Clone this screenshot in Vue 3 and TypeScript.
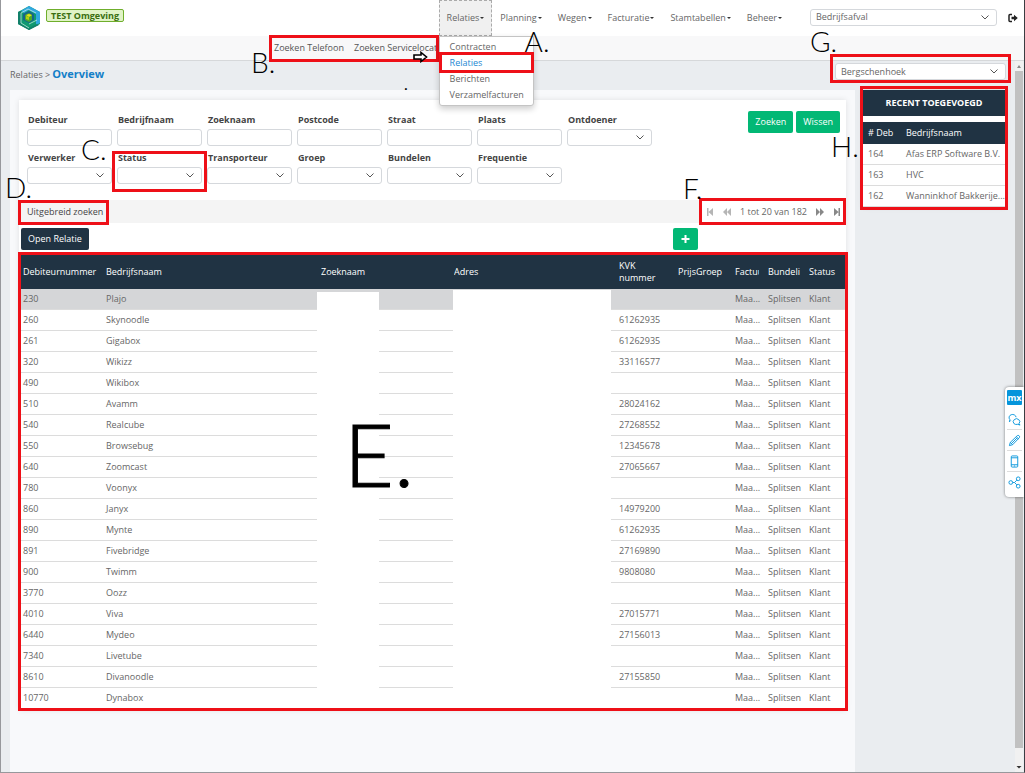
<script setup lang="ts">
import { ref } from 'vue'

interface Row { nr: string; naam: string; kvk: string }
interface Field { id: string; label: string; select: boolean }

const menus = ['Relaties', 'Planning', 'Wegen', 'Facturatie', 'Stamtabellen', 'Beheer']
const submenu = ['Contracten', 'Relaties', 'Berichten', 'Verzamelfacturen']

const fields: Field[] = [
  { id: 'debiteur', label: 'Debiteur', select: false },
  { id: 'bedrijfnaam', label: 'Bedrijfnaam', select: false },
  { id: 'zoeknaam', label: 'Zoeknaam', select: false },
  { id: 'postcode', label: 'Postcode', select: false },
  { id: 'straat', label: 'Straat', select: false },
  { id: 'plaats', label: 'Plaats', select: false },
  { id: 'ontdoener', label: 'Ontdoener', select: true },
  { id: 'verwerker', label: 'Verwerker', select: true },
  { id: 'status', label: 'Status', select: true },
  { id: 'transporteur', label: 'Transporteur', select: true },
  { id: 'groep', label: 'Groep', select: true },
  { id: 'bundelen', label: 'Bundelen', select: true },
  { id: 'frequentie', label: 'Frequentie', select: true },
]

const columns = ['Debiteurnummer', 'Bedrijfsnaam', 'Zoeknaam', 'Adres', 'KVK nummer', 'PrijsGroep', 'Factuur', 'Bundeling', 'Status']

const rows: Row[] = [
  { nr: '230', naam: 'Plajo', kvk: '' },
  { nr: '260', naam: 'Skynoodle', kvk: '61262935' },
  { nr: '261', naam: 'Gigabox', kvk: '61262935' },
  { nr: '320', naam: 'Wikizz', kvk: '33116577' },
  { nr: '490', naam: 'Wikibox', kvk: '' },
  { nr: '510', naam: 'Avamm', kvk: '28024162' },
  { nr: '540', naam: 'Realcube', kvk: '27268552' },
  { nr: '550', naam: 'Browsebug', kvk: '12345678' },
  { nr: '640', naam: 'Zoomcast', kvk: '27065667' },
  { nr: '780', naam: 'Voonyx', kvk: '' },
  { nr: '860', naam: 'Janyx', kvk: '14979200' },
  { nr: '890', naam: 'Mynte', kvk: '61262935' },
  { nr: '891', naam: 'Fivebridge', kvk: '27169890' },
  { nr: '900', naam: 'Twimm', kvk: '9808080' },
  { nr: '3770', naam: 'Oozz', kvk: '' },
  { nr: '4010', naam: 'Viva', kvk: '27015771' },
  { nr: '6440', naam: 'Mydeo', kvk: '27156013' },
  { nr: '7340', naam: 'Livetube', kvk: '' },
  { nr: '8610', naam: 'Divanoodle', kvk: '27155850' },
  { nr: '10770', naam: 'Dynabox', kvk: '' },
]

const recent = [
  { nr: '164', naam: 'Afas ERP Software B.V.' },
  { nr: '163', naam: 'HVC' },
  { nr: '162', naam: 'Wanninkhof Bakkerije...' },
]

const selected = ref(0)
</script>

<template>
  <div class="window">
    <header class="topbar">
      <svg class="logo" viewBox="0 0 24 26" aria-label="Logo">
        <path d="M12 1 23 7v12l-11 6L1 19V7z" fill="#0f9a70" />
        <path d="M12 1 23 7v11l-4 2V9l-7-4-5 3-3-2z" fill="#2fa8e0" />
        <path d="M1 7l3-1v13l8 4 8-4 2 1-10 5L1 19z" fill="#12806a" />
        <path d="M6 9l6-3 5 3v6l-5 3-6-3z" fill="#16648c" />
        <path d="M8 10l4-2 3 2v5l-3 2-4-2z" fill="#4ba82e" />
        <path d="M9 10l3-1 3 1-3 2z" fill="#e6e21a" />
        <path d="M9 11l3 1v3l-3-1z" fill="#b5cf12" />
        <path d="M4 8v10l8 5M12 19l8-4M4 8l7-4 8 4" fill="none" stroke="#d4f2ea" stroke-width="0.7" />
      </svg>
      <span class="env">TEST Omgeving</span>
      <nav class="menu">
        <div v-for="(m, i) in menus" :key="m" class="menu-item" :class="{ open: i === 0 }">
          <button type="button" class="menu-btn">{{ m }}<i class="caret"></i></button>
          <div v-if="i === 0" class="dropdown">
            <a v-for="(s, j) in submenu" :key="s" href="#" :class="{ current: j === 1, mark: j === 1 }">{{ s }}</a>
            <span class="letter letter-a">A.</span>
          </div>
        </div>
      </nav>
      <span class="pick pick-top">
        <select aria-label="Afvalsoort"><option>Bedrijfsafval</option></select>
        <svg class="chev" viewBox="0 0 8 5"><path d="M.5.5 4 4 7.500.500" /></svg>
      </span>
      <button type="button" class="logout" aria-label="Uitloggen">
        <svg viewBox="0 0 10 10"><path d="M4 1.500H2Q1 1.500 1 2.500v5q0 1 1 1h2" fill="none" stroke="#222" stroke-width="1.500" /><path d="M3.500 3.800h2.500V1.800L9.800 5 6 8.200V6.200H3.500z" fill="#222" /></svg>
      </button>
    </header>

    <div class="subbar">
      <div class="subnav mark">
        <a href="#">Zoeken Telefoon</a>
        <a href="#">Zoeken Servicelocat</a>
        <svg class="pointer" viewBox="0 0 15 12"><path d="M1 4h7V1.500L13.500 6 8 10.500V8H1z" fill="#fff" stroke="#000" stroke-width="1.600" /></svg>
        <span class="letter letter-b">B.</span>
        <span class="dot">.</span>
      </div>
    </div>

    <div class="body">
      <div class="page">
        <div class="crumbs">
          <div class="trail"><span>Relaties &gt;</span> <h1>Overview</h1></div>
          <span class="pick pick-place mark">
            <select aria-label="Vestiging"><option>Bergschenhoek</option></select>
            <svg class="chev" viewBox="0 0 8 5"><path d="M.5.5 4 4 7.500.500" /></svg>
            <span class="letter letter-g">G.</span>
          </span>
        </div>

        <div class="columns">
          <main class="panel">
            <div class="card">
              <form class="search" @submit.prevent>
                <div class="fields">
                  <div v-for="f in fields" :key="f.id" class="field" :class="{ mark: f.id === 'status' }">
                    <label :for="f.id">{{ f.label }}</label>
                    <span v-if="f.select" class="pick">
                      <select :id="f.id"><option></option></select>
                      <svg class="chev" viewBox="0 0 8 5"><path d="M.5.5 4 4 7.500.500" /></svg>
                    </span>
                    <input v-else :id="f.id" type="text" />
                    <span v-if="f.id === 'status'" class="letter letter-c">C.</span>
                  </div>
                </div>
                <div class="actions">
                  <button type="submit" class="btn green">Zoeken</button>
                  <button type="reset" class="btn green">Wissen</button>
                </div>
              </form>

              <div class="strip">
                <button type="button" class="more mark">Uitgebreid zoeken<span class="letter letter-d">D.</span></button>
                <div class="pager mark">
                  <button type="button" disabled aria-label="Eerste"><svg viewBox="0 0 8 8"><path d="M1 0h1.500v8H1zM7 0v8L2.500 4z" /></svg></button>
                  <button type="button" disabled aria-label="Vorige"><svg viewBox="0 0 8 8"><path d="M4 0v8L0 4zM8 0v8L4 4z" /></svg></button>
                  <span>1 tot 20 van 182</span>
                  <button type="button" aria-label="Volgende"><svg viewBox="0 0 8 8"><path d="M0 0v8l4-4zM4 0v8l4-4z" /></svg></button>
                  <button type="button" aria-label="Laatste"><svg viewBox="0 0 8 8"><path d="M5.500 0H7v8H5.500zM1 0v8l4.500-4z" /></svg></button>
                  <span class="letter letter-f">F.</span>
                </div>
              </div>

              <div class="tools">
                <button type="button" class="btn navy">Open Relatie</button>
                <button type="button" class="btn green add" aria-label="Toevoegen"><svg viewBox="0 0 8 8"><path d="M3 0h2v3h3v2H5v3H3V5H0V3h3z" /></svg></button>
              </div>

              <div class="grid mark">
                <table>
                  <colgroup>
                    <col class="c-nr" /><col /><col class="c-zoek" /><col class="c-adres" /><col class="c-kvk" />
                    <col class="c-prijs" /><col class="c-fact" /><col class="c-bund" /><col class="c-stat" />
                  </colgroup>
                  <thead>
                    <tr><th v-for="c in columns" :key="c" scope="col" :class="{ wrap: c === 'KVK nummer' }">{{ c }}</th></tr>
                  </thead>
                  <tbody>
                    <tr v-for="(r, i) in rows" :key="r.nr" :class="{ selected: i === selected }" @click="selected = i">
                      <td>{{ r.nr }}</td><td>{{ r.naam }}</td><td></td><td></td><td>{{ r.kvk }}</td><td></td>
                      <td>Maa...</td><td>Splitsen</td><td>Klant</td>
                    </tr>
                  </tbody>
                </table>
                <div class="cover cover-zoek"></div>
                <div class="cover cover-adres"></div>
                <span class="letter letter-e">E.</span>
              </div>
            </div>
          </main>

          <aside class="recent mark">
            <h2>RECENT TOEGEVOEGD</h2>
            <table>
              <colgroup><col class="c-deb" /><col /></colgroup>
              <thead><tr><th scope="col"># Deb</th><th scope="col">Bedrijfsnaam</th></tr></thead>
              <tbody>
                <tr v-for="r in recent" :key="r.nr"><td>{{ r.nr }}</td><td>{{ r.naam }}</td></tr>
              </tbody>
            </table>
            <span class="letter letter-h">H.</span>
          </aside>
        </div>
      </div>

      <div class="scroll" aria-hidden="true">
        <svg viewBox="0 0 8 10"><path d="M4 4l2 3H2z" fill="#888" /></svg>
        <div class="thumb"></div>
        <svg class="down" viewBox="0 0 8 10"><path d="M4 6.500 1.500 4h5z" fill="#333" /></svg>
      </div>
    </div>

    <div class="widget">
      <button type="button" class="mx">mx</button>
      <button type="button" aria-label="Chat"><svg viewBox="0 0 14 14"><path d="M3 8 1.500 9.500 2 7A3.800 3.300 0 1 1 8.700 4.500M6.500 11.500A3.500 3.200 0 1 1 11.800 11.500L13 13l-2.500-.8Q8 12.800 6.500 11.500z" /></svg></button>
      <button type="button" aria-label="Bewerken"><svg viewBox="0 0 14 14"><path d="M1.500 12.500 2.500 9 10 1.800q1-.8 2 .2t.2 2L5 11.500zM2.500 9 5 11.500M9 3l2.300 2.300M4 10l6-6" /></svg></button>
      <button type="button" aria-label="Mobiel"><svg viewBox="0 0 14 14"><path d="M4.500 1h5q1 0 1 1v10q0 1-1 1h-5q-1 0-1-1V2q0-1 1-1zM3.500 3h7M3.500 10.500h7M6.500 11.800h1" /></svg></button>
      <button type="button" aria-label="Delen"><svg viewBox="0 0 14 14"><circle cx="3" cy="7" r="2" /><circle cx="11" cy="3" r="2" /><circle cx="11" cy="11" r="2" /><path d="M5 7h2l2.500-2.500M7 7l2.500 2.500" /></svg></button>
    </div>
  </div>
</template>

<style>
html, body { margin: 0; background: #eaedf0; }
</style>

<style scoped>
* { box-sizing: border-box; }
.window {
  position: relative; display: flex; flex-direction: column; min-height: 100vh; overflow: hidden;
  border: solid #97989c; border-width: 0 1px 1px 1px; border-right-color: #3a3d42;
  background: #eaedf0; color: #666; font: 9px/14px "Open Sans", "Noto Sans", sans-serif;
}
button, input, select { font: inherit; color: inherit; margin: 0; padding: 0; border: 0; background: none; }
button { cursor: pointer; }
a { color: inherit; text-decoration: none; }
h1, h2 { margin: 0; }

/* Red highlight frames and their letters */
.mark { position: relative; }
.mark::after { content: ""; position: absolute; inset: 0; border: 3px solid #ee1018; pointer-events: none; z-index: 2; }
.letter { position: absolute; z-index: 5; font: 300 28px/28px Lato, sans-serif; color: #000; white-space: nowrap; pointer-events: none; }
.letter-a { left: 85px; top: -10px; }
.letter-b { left: -18px; top: 12px; }
.letter-c { left: -36px; top: -16px; }
.letter-d { left: -16px; top: -27px; }
.letter-e { left: 325px; top: 157px; font-size: 86px; line-height: 86px; -webkit-text-stroke: 1px #000; }
.letter-f { left: -16px; top: -26px; }
.letter-g { left: -25px; top: -36px; }
.letter-h { left: -32px; top: 42px; }
.dot { position: absolute; left: 135px; top: 40px; font: 400 16px/16px Lato, sans-serif; color: #000; }

.topbar { display: flex; align-items: center; height: 36px; background: #fff; }
.logo { width: 24px; height: 26px; margin-left: 16px; }
.env { margin: -5px 0 0 5px; padding: 0 4px; border: 1px solid #6fae2c; border-radius: 2px; background: #e0f3c6; color: #3a6e10; font-weight: 700; line-height: 11px; }
.menu { display: flex; align-self: stretch; margin-left: auto; }
.menu-item { position: relative; display: flex; }
.menu-btn { padding: 0 7px; border: 1px solid transparent; color: #666; }
.open .menu-btn { background: #f0f0f0; border: 1px dashed #aaa; }
.caret { display: inline-block; margin-left: 1px; vertical-align: 2px; border: solid transparent; border-width: 2px 2px 0; border-top-color: #333; }
.dropdown { position: absolute; z-index: 4; left: 0; top: 36px; width: 95px; padding: 2px 0; background: #fff; border: 1px solid #c4c4c4; border-radius: 0 0 3px 3px; box-shadow: 0 3px 6px rgba(0, 0, 0, .2); }
.dropdown a { display: block; padding-left: 10px; line-height: 16px; }
.dropdown .current { color: #1b87d2; }
.dropdown .mark::after { inset: -3px -1px -2px; }

.pick { display: grid; align-items: center; }
.pick > select { grid-area: 1 / 1; width: 100%; height: 17px; padding: 0 18px 0 5px; appearance: none; border: 1px solid #d5d8dc; border-radius: 3px; background: #fff; }
.chev { grid-area: 1 / 1; justify-self: end; width: 8px; height: 5px; margin-right: 8px; fill: none; stroke: #555; stroke-width: 1; pointer-events: none; z-index: 1; }
.pick-top { width: 187px; margin: -2px 0 0 20px; }
.logout { width: 10px; height: 10px; margin: 0 6px 0 11px; }
.logout svg, .pager svg, .add svg { display: block; width: 100%; height: 100%; }

.subbar { display: flex; height: 25px; background: #f8f8f9; border-bottom: 1px solid #d6d8da; }
.subnav { display: flex; gap: 10px; width: 170px; margin-left: 268px; padding-left: 5px; line-height: 24px; color: #555; white-space: nowrap; }
.subnav::after { inset: -1px 0 -2px; }
.pointer { position: absolute; left: 144px; top: 15px; width: 15px; height: 12px; z-index: 3; }

.body { display: flex; flex: 1; }
.page { display: flex; flex: 1; flex-direction: column; min-width: 0; padding-left: 9px; }
.crumbs { display: flex; justify-content: space-between; height: 29px; padding: 2px 9px 0 0; }
.trail { display: flex; align-items: baseline; gap: 2px; line-height: 22px; }
.trail h1 { font-size: 11px; font-weight: 700; color: #147fc8; }
.pick-place { width: 171px; height: 17px; }
.pick-place::after { inset: -9px -5px -3px; }
.columns { display: flex; flex: 1; align-items: flex-start; }
.panel { flex: 1; align-self: stretch; min-width: 0; padding: 10px 9px 20px 9px; background: #f8f9fb; }
.card { background: #fff; box-shadow: 0 0 6px rgba(0, 0, 0, .1); }
.search { display: flex; justify-content: space-between; height: 100px; padding: 13px 6px 0 8px; }
.fields { display: grid; grid-template-columns: repeat(7, 85px); gap: 5px; align-content: start; }
.field { display: grid; gap: 2px; }
.field label { padding-left: 1px; color: #444; font-weight: 700; line-height: 14px; }
.field input { width: 100%; height: 17px; padding: 0 5px; border: 1px solid #d5d8dc; border-radius: 3px; background: #fff; }
.field.mark::after { inset: 0 -5px -8px; }
.actions { display: flex; gap: 3px; align-self: flex-start; margin-top: -2px; }
.btn { height: 22px; padding: 0 7px; border-radius: 2px; color: #fff; }
.green { background: #02b875; }
.navy { background: #203343; }

.strip { display: flex; justify-content: space-between; height: 23px; margin-left: 2px; background: #f4f4f4; }
.more { padding: 0 6px; color: #444; }
.more::after { inset: 0 0 -2px -3px; }
.pager { display: flex; align-items: center; justify-content: space-between; width: 147px; padding: 0 5px 0 7px; background: #fff; color: #666; white-space: nowrap; }
.pager::after { inset: -2px 0; }
.pager button { width: 8px; height: 8px; fill: #888; }
.pager button:disabled { fill: #b5b5b5; }
.tools { display: flex; justify-content: space-between; padding: 5px 148px 4px 2px; }
.add { width: 25px; padding: 7px 8px; fill: #fff; }
.add svg { width: 9px; height: 8px; }

table { width: 100%; table-layout: fixed; border-collapse: separate; border-spacing: 0; }
th, td { height: 21px; padding: 0; overflow: hidden; text-align: left; white-space: nowrap; line-height: 14px; }
th { background: #203343; color: #fff; font-weight: 400; }
td { border-bottom: 1px solid #dcdcdc; }
.grid { padding: 0 1px 1px; }
.grid::after { inset: -2px -2px -1px -1px; }
.grid th { height: 35px; border: solid #203343; border-width: 1px 6px 0 3px; }
.grid td { padding: 0 0 0 3px; }
.grid th:first-child { border-right-width: 0; }
.grid th.wrap { white-space: normal; line-height: 12px; }
.grid tbody tr:last-child td { border-bottom-color: #fff; }
.selected td { background: #d5d6d8; }
.c-nr { width: 83px; }
.c-zoek { width: 133px; }
.c-adres { width: 165px; }
.c-kvk { width: 59px; }
.c-prijs { width: 57px; }
.c-fact { width: 33px; }
.c-bund { width: 41px; }
.c-stat { width: 39px; }
.cover { position: absolute; z-index: 1; bottom: 2px; background: #fff; }
.cover-zoek { top: 38px; right: 467px; width: 62px; }
.cover-adres { top: 36px; right: 235px; width: 158px; }

.recent { width: 142px; margin: 0 10px 0 8px; background: #fff; box-shadow: 0 0 6px rgba(0, 0, 0, .1); }
.recent::after { inset: -4px -3px -3px; }
.recent h2 { margin-bottom: 6px; background: #203343; color: #fff; font-size: 9px; line-height: 26px; text-align: center; }
.recent th { height: 22px; }
.recent th, .recent td { padding: 0 0 0 5px; }
.c-deb { width: 38px; }

.scroll { display: flex; flex-direction: column; width: 8px; margin-right: 1px; background: #f1f1f1; }
.scroll svg { width: 8px; height: 10px; }
.thumb { flex: 1; margin-bottom: 14px; background: #c1c1c1; }
.widget { position: absolute; z-index: 6; right: 0; top: 387px; width: 19px; padding: 3px 2px 4px; background: #fff; border-radius: 4px 0 0 4px; box-shadow: 0 0 3px rgba(0, 0, 0, .5); }
.widget button { display: block; width: 15px; height: 21px; border-bottom: 1px solid #ddd; }
.widget button:last-child { border-bottom: 0; }
.widget .mx { height: 15px; margin: 0 0 4px; border: 0; border-radius: 1px; background: #0595db; color: #fff; font-weight: 700; line-height: 14px; }
.widget svg { display: block; width: 13px; height: 13px; margin: 0 auto; fill: none; stroke: #0595db; stroke-width: 1; }
</style>
